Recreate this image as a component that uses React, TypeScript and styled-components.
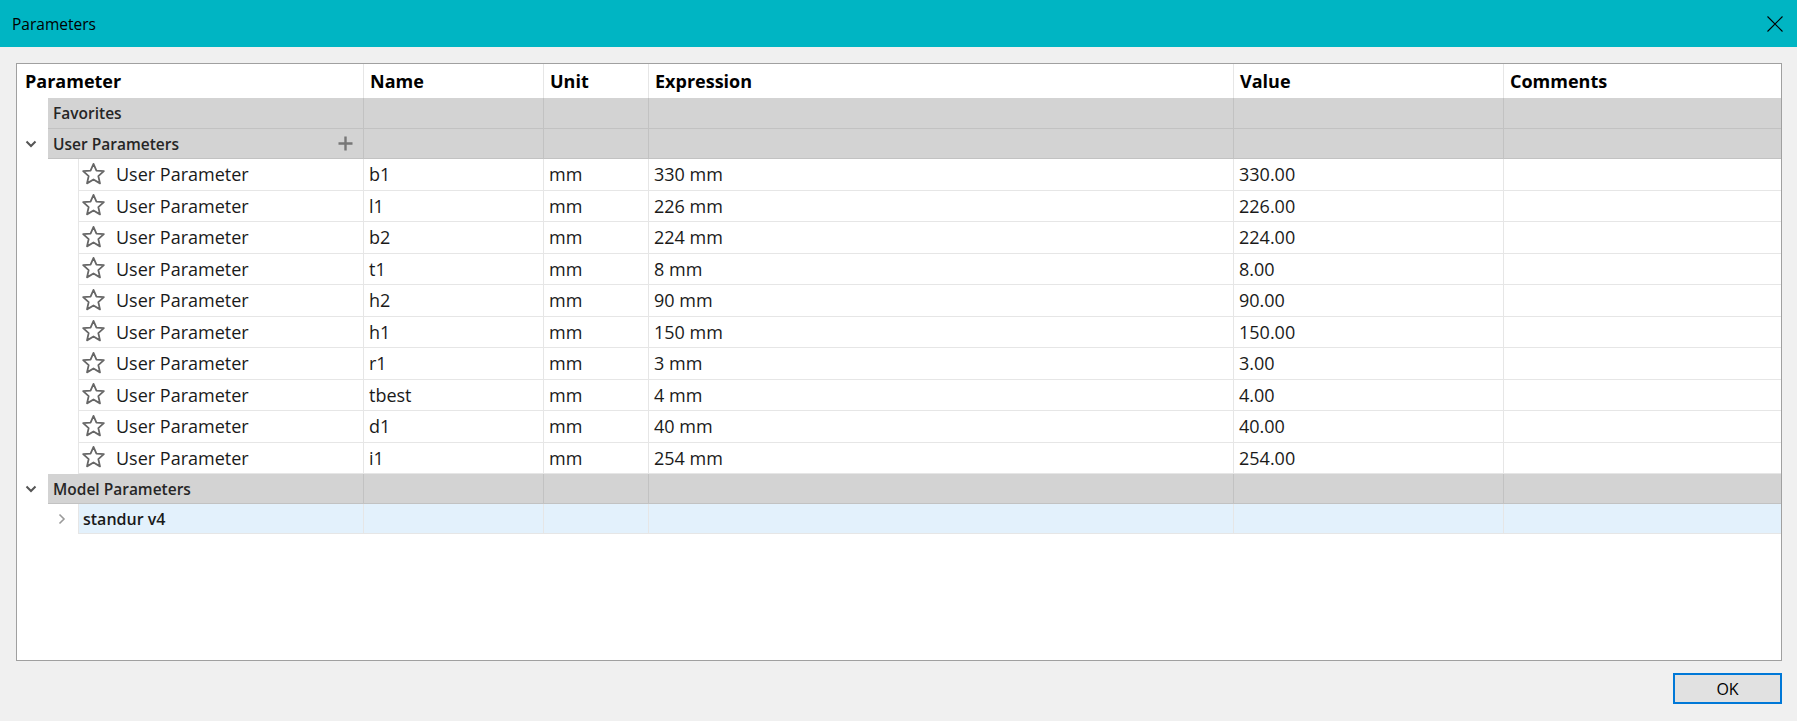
import styled, { createGlobalStyle } from "styled-components";

const GlobalStyle = createGlobalStyle`
  html, body {
    margin: 0;
    padding: 0;
    background: #f0f0f0;
    font-family: "Open Sans", "Noto Sans", "Liberation Sans", sans-serif;
  }
`;

const COLS = "346px 180px 105px 585px 270px 278px";

const Window = styled.div`
  display: flex;
  flex-direction: column;
  width: 1797px;
  height: 721px;
  background: #f0f0f0;
  overflow: hidden;
`;

const TitleBar = styled.div`
  height: 47px;
  flex-shrink: 0;
  background: #00b5c3;
  display: flex;
  align-items: center;
  justify-content: space-between;
  padding: 0 14px 0 12px;
`;

const Title = styled.span`
  font-size: 15.5px;
  color: #000;
`;

const Body = styled.div`
  flex: 1;
  display: flex;
  flex-direction: column;
  padding: 16px 15px 0 16px;
`;

const Table = styled.div`
  height: 598px;
  box-sizing: border-box;
  border: 1px solid #a0a0a0;
  background: #fff;
  display: flex;
  flex-direction: column;
`;

const Row = styled.div<{ $h: number }>`
  display: grid;
  grid-template-columns: ${COLS};
  height: ${(p) => p.$h}px;
  flex-shrink: 0;
`;

const HeadCell = styled.div<{ $first?: boolean }>`
  display: flex;
  align-items: center;
  padding-left: ${(p) => (p.$first ? 8 : 6)}px;
  border-left: ${(p) => (p.$first ? "none" : "1px solid #e6e6e6")};
  font-size: 18px;
  font-weight: 700;
  color: #000;
`;

const TreeCell = styled.div`
  display: flex;
  min-width: 0;
`;

const Indent = styled.div<{ $w: number }>`
  width: ${(p) => p.$w}px;
  flex-shrink: 0;
  display: flex;
  align-items: center;
  justify-content: flex-end;
`;

const GroupLabel = styled.div`
  flex: 1;
  display: flex;
  align-items: center;
  justify-content: space-between;
  padding: 0 10px 0 5px;
  background: #d3d3d3;
  border-bottom: 1px solid #c2c2c2;
  font-size: 15.5px;
  font-weight: 600;
  color: #262626;
`;

const GroupCell = styled.div`
  background: #d3d3d3;
  border-left: 1px solid #c2c2c2;
  border-bottom: 1px solid #c2c2c2;
`;

const ParamLabel = styled.div<{ $tint?: boolean }>`
  flex: 1;
  display: flex;
  align-items: center;
  gap: 11px;
  padding-left: ${(p) => (p.$tint ? 4 : 3)}px;
  background: ${(p) => (p.$tint ? "#e3f1fc" : "#fff")};
  border-left: 1px solid #e6e6e6;
  border-bottom: 1px solid #e6e6e6;
  font-size: ${(p) => (p.$tint ? "16px" : "18px")};
  font-weight: ${(p) => (p.$tint ? 600 : 400)};
  color: #1a1a1a;
`;

const Cell = styled.div<{ $tint?: boolean }>`
  display: flex;
  align-items: center;
  padding-left: 5px;
  background: ${(p) => (p.$tint ? "#e3f1fc" : "#fff")};
  border-left: 1px solid #e6e6e6;
  border-bottom: 1px solid #e6e6e6;
  font-size: 18px;
  color: #1a1a1a;
  white-space: nowrap;
`;

const Footer = styled.div`
  display: flex;
  justify-content: flex-end;
  margin-top: 12px;
`;

const OkButton = styled.button`
  width: 109px;
  height: 31px;
  box-sizing: border-box;
  border: 2px solid #0078d7;
  background: #e1e1e1;
  font-family: inherit;
  font-size: 16px;
  color: #000;
  padding: 0;
`;

const ChevronDown = () => (
  <svg width="12" height="8" viewBox="0 0 12 8" style={{ marginRight: 11 }}>
    <path d="M1.5 1.5 L6 6 L10.5 1.5" fill="none" stroke="#555" strokeWidth="2" />
  </svg>
);

const ChevronRight = () => (
  <svg width="8" height="12" viewBox="0 0 8 12" style={{ marginRight: 12 }}>
    <path d="M1.5 1.5 L6 6 L1.5 10.5" fill="none" stroke="#9a9a9a" strokeWidth="1.6" />
  </svg>
);

const Plus = () => (
  <svg width="15" height="15" viewBox="0 0 15 15">
    <path d="M7.5 0.5 V14.5 M0.5 7.5 H14.5" stroke="#777" strokeWidth="2.4" />
  </svg>
);

const Star = () => (
  <svg width="23" height="23" viewBox="0 0 22 22" style={{ overflow: "visible" }}>
    <polygon
      points="11,0.8 13.8,7.2 20.9,7.8 15.6,12.5 17.2,19.5 11,15.8 4.8,19.5 6.4,12.5 1.1,7.8 8.2,7.2"
      fill="none"
      stroke="#666"
      strokeWidth="1.7"
      strokeLinejoin="round"
    />
  </svg>
);

const CloseX = () => (
  <svg width="16" height="16" viewBox="0 0 16 16">
    <path d="M0.5 0.5 L15.5 15.5 M15.5 0.5 L0.5 15.5" stroke="#000" strokeWidth="1.1" />
  </svg>
);

const params = [
  ["b1", 330],
  ["l1", 226],
  ["b2", 224],
  ["t1", 8],
  ["h2", 90],
  ["h1", 150],
  ["r1", 3],
  ["tbest", 4],
  ["d1", 40],
  ["i1", 254],
] as const;

const headers = ["Parameter", "Name", "Unit", "Expression", "Value", "Comments"];

function GroupRow({
  label,
  h,
  open,
  plus,
}: {
  label: string;
  h: number;
  open?: boolean;
  plus?: boolean;
}) {
  return (
    <Row $h={h}>
      <TreeCell>
        <Indent $w={31}>{open && <ChevronDown />}</Indent>
        <GroupLabel>
          {label}
          {plus && <Plus />}
        </GroupLabel>
      </TreeCell>
      {[0, 1, 2, 3, 4].map((i) => (
        <GroupCell key={i} />
      ))}
    </Row>
  );
}

function App() {
  return (
    <Window>
      <GlobalStyle />
      <TitleBar>
        <Title>Parameters</Title>
        <CloseX />
      </TitleBar>
      <Body>
        <Table>
          <Row $h={34}>
            {headers.map((h, i) => (
              <HeadCell key={h} $first={i === 0}>
                {h}
              </HeadCell>
            ))}
          </Row>
          <GroupRow label="Favorites" h={31} />
          <GroupRow label="User Parameters" h={30} open plus />
          {params.map(([name, v]) => (
            <Row $h={31.5} key={name}>
              <TreeCell>
                <Indent $w={61} />
                <ParamLabel>
                  <Star />
                  User Parameter
                </ParamLabel>
              </TreeCell>
              <Cell>{name}</Cell>
              <Cell>mm</Cell>
              <Cell>{v} mm</Cell>
              <Cell>{v.toFixed(2)}</Cell>
              <Cell />
            </Row>
          ))}
          <GroupRow label="Model Parameters" h={30} open />
          <Row $h={30}>
            <TreeCell>
              <Indent $w={61}>
                <ChevronRight />
              </Indent>
              <ParamLabel $tint>standur v4</ParamLabel>
            </TreeCell>
            {[0, 1, 2, 3, 4].map((i) => (
              <Cell key={i} $tint />
            ))}
          </Row>
        </Table>
        <Footer>
          <OkButton>OK</OkButton>
        </Footer>
      </Body>
    </Window>
  );
}

export default App;
